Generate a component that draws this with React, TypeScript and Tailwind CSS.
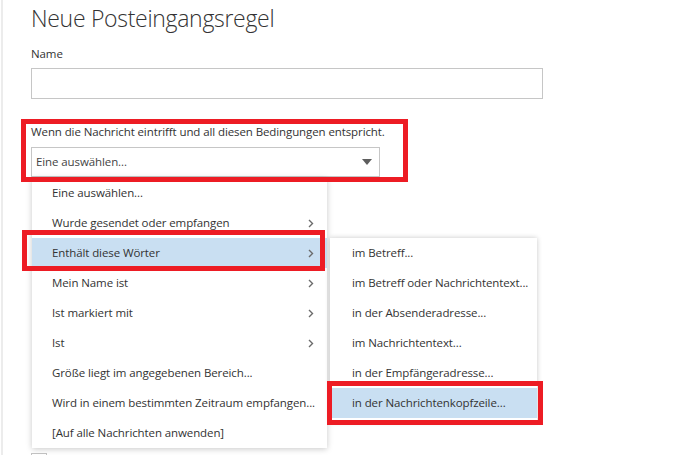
const FONT = "font-['Segoe_UI','Open_Sans','Noto_Sans',sans-serif]";

const MAIN_ITEMS: { label: string; sub?: boolean; active?: boolean }[] = [
  { label: "Eine auswählen..." },
  { label: "Wurde gesendet oder empfangen", sub: true },
  { label: "Enthält diese Wörter", sub: true, active: true },
  { label: "Mein Name ist", sub: true },
  { label: "Ist markiert mit", sub: true },
  { label: "Ist", sub: true },
  { label: "Größe liegt im angegebenen Bereich..." },
  { label: "Wird in einem bestimmten Zeitraum empfangen..." },
  { label: "[Auf alle Nachrichten anwenden]" },
];

const SUB_ITEMS = [
  "im Betreff...",
  "im Betreff oder Nachrichtentext...",
  "in der Absenderadresse...",
  "im Nachrichtentext...",
  "in der Empfängeradresse...",
  "in der Nachrichtenkopfzeile...",
];

const TEXT = "whitespace-nowrap text-[11.5px] tracking-[-0.1px] text-[#333]";

function Chevron() {
  return (
    <svg width="6" height="9" viewBox="0 0 6 9" className="shrink-0">
      <path d="M1 1 L4.5 4.5 L1 8" fill="none" stroke="#6b6b6b" strokeWidth="1.4" />
    </svg>
  );
}

function SubMenu() {
  return (
    <div className="absolute left-[298px] top-[60px] w-[207px] bg-white pb-1 shadow-[0_0_5px_rgba(0,0,0,0.22)]">
      {SUB_ITEMS.map((s, i) => (
        <div
          key={s}
          className={`flex h-[30px] items-center pl-[22px] ${TEXT} ${
            i === SUB_ITEMS.length - 1 ? "bg-[#c9dff2]" : ""
          }`}
        >
          {s}
        </div>
      ))}
    </div>
  );
}

function ConditionMenu() {
  return (
    <div className="absolute left-px top-[31px] z-10 w-[295px] bg-white shadow-[0_1px_6px_rgba(0,0,0,0.22)]">
      {MAIN_ITEMS.map((it) => (
        <div
          key={it.label}
          className={`flex h-[30px] items-center justify-between pl-[20px] pr-[13px] ${TEXT} ${
            it.active ? "bg-[#c9dff2]" : ""
          }`}
        >
          <span>{it.label}</span>
          {it.sub && <Chevron />}
        </div>
      ))}
      <SubMenu />
    </div>
  );
}

export default function App() {
  return (
    <div className={`relative h-[455px] w-[694px] overflow-hidden bg-white ${FONT}`}>
      <div className="ml-px h-full border-l-2 border-[#ececec] pl-[28px]">
        <h1 className="text-[23px] font-light leading-[36px] tracking-[-0.3px] text-[#333]">
          Neue Posteingangsregel
        </h1>

        <div className={`mt-[10px] leading-[16px] ${TEXT}`}>Name</div>
        <div className="mt-[6px] h-[31px] w-[512px] border border-[#c6c6c6] bg-white" />

        <div className={`mt-[25px] leading-[16px] ${TEXT}`}>
          Wenn die Nachricht eintrifft und all diesen Bedingungen entspricht.
        </div>
        <div className="relative mt-[7px] w-[349px]">
          <div className={`flex h-[30px] items-center justify-between border border-[#c6c6c6] bg-white pl-[4px] pr-[7px] ${TEXT} text-[#444]`}>
            <span>Eine auswählen...</span>
            <span className="h-0 w-0 border-l-[5px] border-r-[5px] border-t-[6px] border-l-transparent border-r-transparent border-t-[#5e5e5e]" />
          </div>
          <ConditionMenu />
        </div>

        <div className="mt-[276px] h-4 w-4 border border-[#c4c4c4]" />
      </div>

      {/* Annotation frames */}
      <div className="absolute left-[21px] top-[119px] z-20 h-[63px] w-[387px] border-[5px] border-[#ed1c24]" />
      <div className="absolute left-[22px] top-[230px] z-20 h-[41px] w-[303px] border-[5px] border-[#ed1c24]" />
      <div className="absolute left-[327px] top-[381px] z-20 h-[44px] w-[216px] border-[5px] border-[#ed1c24]" />
    </div>
  );
}
